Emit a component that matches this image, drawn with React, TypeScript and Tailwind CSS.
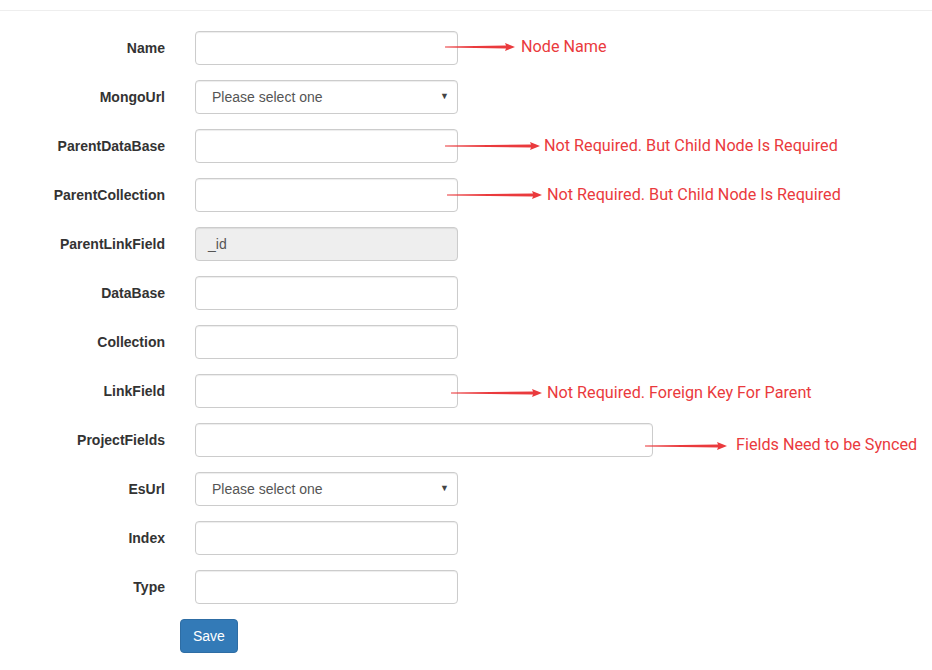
import React from "react";

function Arrow({ w }: { w: number }) {
  return (
    <svg width={w} height={10} viewBox={`0 0 ${w} 10`} className="shrink-0">
      <path
        d={`M0 4.5 L${w - 9} 3.5 L${w - 10} 1 L${w} 5 L${w - 10} 9 L${w - 9} 6.5 L0 5.5 Z`}
        fill="#ea3a3d"
      />
    </svg>
  );
}

function Note({ w, gap, text }: { w: number; gap: number; text: string }) {
  return (
    <div className="flex items-center">
      <Arrow w={w} />
      <span
        className="whitespace-nowrap text-[16.2px] text-[#ea3a3d] font-['Roboto','Noto_Sans',sans-serif]"
        style={{ marginLeft: gap }}
      >
        {text}
      </span>
    </div>
  );
}

const baseCls =
  "h-[34px] w-full rounded-[4px] border border-[#ccc] px-[12px] text-[14px] text-[#555] shadow-[inset_0_1px_1px_rgba(0,0,0,0.075)] outline-none font-['Liberation_Sans',Arial,sans-serif]";
const inputCls = baseCls + " bg-white";

function Row({ label, children }: { label: string; children: React.ReactNode }) {
  return (
    <div className="mb-[15px] flex h-[34px] items-center">
      <label className="w-[165px] shrink-0 text-right text-[14px] font-bold text-[#333]">{label}</label>
      {children}
    </div>
  );
}

function Select() {
  return (
    <div className="relative ml-[30px] w-[263px] shrink-0">
      <div className={inputCls + " flex items-center pl-[16px]"}>Please select one</div>
      <span className="absolute right-[9px] top-[12px] text-[9px] leading-none text-[#444]">▼</span>
    </div>
  );
}

function TextInput({ w = 263 }: { w?: number }) {
  return (
    <div className={w === 263 ? "ml-[30px] w-[263px] shrink-0" : "ml-[30px] w-[458px] shrink-0"}>
      <input className={inputCls} />
    </div>
  );
}

export default function App() {
  return (
    <div className="min-h-screen bg-white font-['Liberation_Sans',Arial,sans-serif] text-[14px] text-[#333]">
      <div className="h-[11px] border-b border-[#eee]" />
      <form className="pt-[20px]">
        <Row label="Name">
          <TextInput />
          <div className="-ml-[13px] -mt-[2px]">
            <Note w={70} gap={6} text="Node Name" />
          </div>
        </Row>
        <Row label="MongoUrl">
          <Select />
        </Row>
        <Row label="ParentDataBase">
          <TextInput />
          <div className="-ml-[13px] mt-0">
            <Note w={95} gap={4} text="Not Required. But Child Node Is Required" />
          </div>
        </Row>
        <Row label="ParentCollection">
          <TextInput />
          <div className="-ml-[11px] mt-0">
            <Note w={95} gap={5} text="Not Required. But Child Node Is Required" />
          </div>
        </Row>
        <Row label="ParentLinkField">
          <div className="ml-[30px] w-[263px] shrink-0">
            <div className={baseCls + " flex items-center bg-[#eee]"}>_id</div>
          </div>
        </Row>
        <Row label="DataBase">
          <TextInput />
        </Row>
        <Row label="Collection">
          <TextInput />
        </Row>
        <Row label="LinkField">
          <TextInput />
          <div className="-ml-[7px] mt-[4px]">
            <Note w={91} gap={5} text="Not Required. Foreign Key For Parent" />
          </div>
        </Row>
        <Row label="ProjectFields">
          <TextInput w={458} />
          <div className="-ml-[8px] mt-[11px]">
            <Note w={82} gap={9} text="Fields Need to be Synced" />
          </div>
        </Row>
        <Row label="EsUrl">
          <Select />
        </Row>
        <Row label="Index">
          <TextInput />
        </Row>
        <Row label="Type">
          <TextInput />
        </Row>
        <div className="pl-[180px]">
          <button
            type="button"
            className="h-[34px] rounded-[4px] border border-[#2e6da4] bg-[#337ab7] px-[12px] text-[14px] leading-[20px] text-white font-['Liberation_Sans',Arial,sans-serif]"
          >
            Save
          </button>
        </div>
      </form>
    </div>
  );
}
